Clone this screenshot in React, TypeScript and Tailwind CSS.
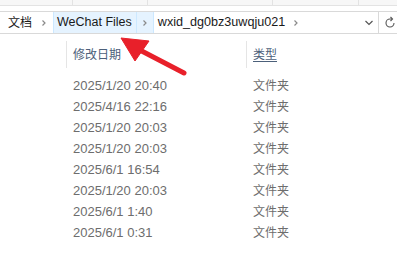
const rows = [
  "2025/1/20 20:40",
  "2025/4/16 22:16",
  "2025/1/20 20:03",
  "2025/1/20 20:03",
  "2025/6/1 16:54",
  "2025/1/20 20:03",
  "2025/6/1 1:40",
  "2025/6/1 0:31",
];

const Chevron = () => (
  <svg width="8" height="8" viewBox="0 0 8 8" className="shrink-0">
    <path d="M2.5 1.5 L5 4 L2.5 6.5" fill="none" stroke="#8a8a8a" strokeWidth="1.2" />
  </svg>
);

export default function App() {
  return (
    <div
      className="relative w-[397px] h-[272px] bg-white overflow-hidden text-[12px]"
      style={{ fontFamily: '"Liberation Sans", "Noto Sans CJK SC", sans-serif' }}
    >
      {/* toolbar remnant */}
      <div className="h-[6px] bg-[#f7f7f7] border-b border-[#e3e3e3] flex">
        <div className="w-[73px] border-r border-[#e3e3e3]" />
        <div className="w-[75px] border-r border-[#e3e3e3]" />
        <div className="w-[125px] border-r border-[#e3e3e3]" />
        <div className="w-[86px] border-r border-[#e3e3e3]" />
      </div>

      {/* address bar */}
      <div className="mt-[5px] h-[23px] flex border-y border-[#d9d9d9] text-[#1a1a1a]">
        <div className="w-[381px] flex items-center border-r border-[#d9d9d9]">
          <span className="pl-[8px] pr-[6px]">文档</span>
          <span className="px-[2px]"><Chevron /></span>
          <div className="ml-[3px] h-full flex bg-[#e5f3ff] border-x border-[#cce8ff]">
            <span className="flex items-center pl-[3px] pr-[4px] border-r border-[#cce8ff] text-[12.5px]">WeChat Files</span>
            <span className="flex items-center px-[4px]"><Chevron /></span>
          </div>
          <span className="pl-[4px] pr-[7px] text-[12.6px]">wxid_dg0bz3uwqju021</span>
          <Chevron />
          <div className="flex-1" />
          <svg width="10" height="8" viewBox="0 0 10 8" className="mr-[4px]">
            <path d="M1.5 2 L5 5.5 L8.5 2" fill="none" stroke="#555" strokeWidth="1.2" />
          </svg>
        </div>
        <div className="flex-1 flex items-center pl-[4px]">
          <svg width="14" height="14" viewBox="0 0 14 14">
            <path d="M11 7 A4 4 0 1 1 7 3 L9 3" fill="none" stroke="#555" strokeWidth="1.1" />
            <path d="M7.5 1 L9.5 3 L7.5 5" fill="none" stroke="#555" strokeWidth="1.1" />
          </svg>
        </div>
      </div>

      {/* column header */}
      <div className="mt-[7px] h-[27px] flex text-[#4c607a]">
        <div className="w-[66px]" />
        <div className="w-[180px] border-l border-[#e5e5e5] flex items-center pl-[6px]">修改日期</div>
        <div className="flex-1 border-l border-[#e5e5e5] flex items-center pl-[6px]">
          <span className="underline underline-offset-2">类型</span>
        </div>
      </div>

      {/* rows */}
      <div className="mt-[7px] flex flex-col text-[#6d6d6d]">
        {rows.map((d, i) => (
          <div key={i} className="h-[21px] flex items-center">
            <span className="w-[253px] pl-[73px] text-[13px]">{d}</span>
            <span>文件夹</span>
          </div>
        ))}
      </div>

      {/* annotation arrow */}
      <svg className="absolute left-0 top-0 pointer-events-none" width="397" height="272">
        <line x1="184" y1="73" x2="134" y2="47" stroke="#e8202a" strokeWidth="5" strokeLinecap="round" />
        <polygon points="121,38 149,41 135,61" fill="#e8202a" strokeLinejoin="round" stroke="#e8202a" strokeWidth="1" />
      </svg>
    </div>
  );
}
